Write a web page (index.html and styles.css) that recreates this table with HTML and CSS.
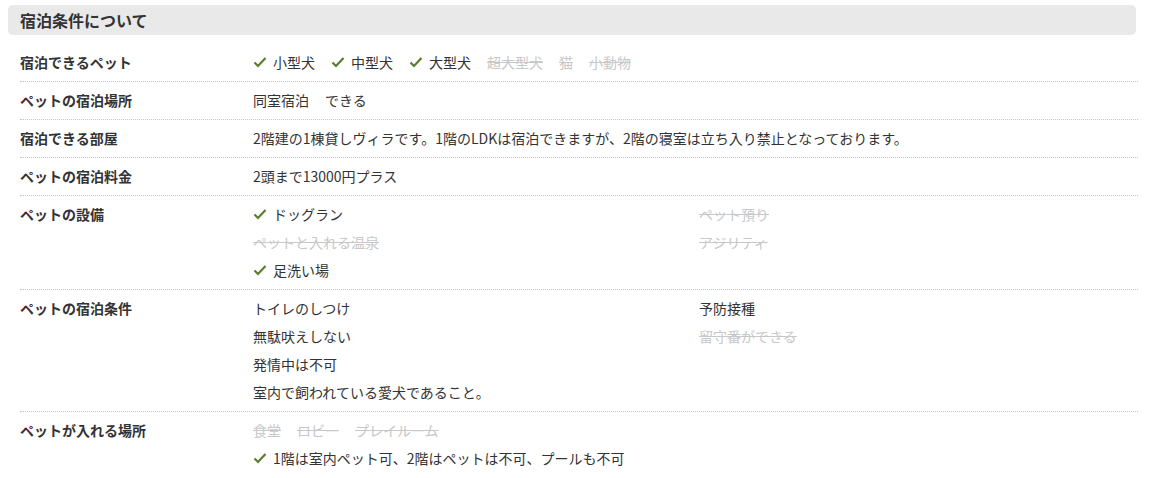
FILE: index.html
```html
<!DOCTYPE html>
<html lang="ja">
<head>
<meta charset="utf-8">
<title>宿泊条件について</title>
<link rel="stylesheet" href="styles.css">
</head>
<body>
<section class="conditions">
  <h2 class="conditions-title">宿泊条件について</h2>
  <dl class="cond-list">
    <div class="cond-row">
      <dt class="cond-label">宿泊できるペット</dt>
      <dd class="cond-value">
        <ul class="inline-items">
          <li class="item ok"><svg class="check" viewBox="0 0 14 14"><path d="M1.5 7.5 L5 11 L12.5 3"/></svg>小型犬</li>
          <li class="item ok"><svg class="check" viewBox="0 0 14 14"><path d="M1.5 7.5 L5 11 L12.5 3"/></svg>中型犬</li>
          <li class="item ok"><svg class="check" viewBox="0 0 14 14"><path d="M1.5 7.5 L5 11 L12.5 3"/></svg>大型犬</li>
          <li class="item ng">超大型犬</li>
          <li class="item ng">猫</li>
          <li class="item ng">小動物</li>
        </ul>
      </dd>
    </div>
    <div class="cond-row">
      <dt class="cond-label">ペットの宿泊場所</dt>
      <dd class="cond-value">
        <ul class="inline-items">
          <li class="item">同室宿泊</li>
          <li class="item">できる</li>
        </ul>
      </dd>
    </div>
    <div class="cond-row">
      <dt class="cond-label">宿泊できる部屋</dt>
      <dd class="cond-value">2階建の1棟貸しヴィラです。1階のLDKは宿泊できますが、2階の寝室は立ち入り禁止となっております。</dd>
    </div>
    <div class="cond-row">
      <dt class="cond-label">ペットの宿泊料金</dt>
      <dd class="cond-value">2頭まで13000円プラス</dd>
    </div>
    <div class="cond-row">
      <dt class="cond-label">ペットの設備</dt>
      <dd class="cond-value">
        <ul class="grid-items">
          <li class="item ok"><svg class="check" viewBox="0 0 14 14"><path d="M1.5 7.5 L5 11 L12.5 3"/></svg>ドッグラン</li>
          <li class="item ng">ペット預り</li>
          <li class="item ng">ペットと入れる温泉</li>
          <li class="item ng">アジリティ</li>
          <li class="item ok"><svg class="check" viewBox="0 0 14 14"><path d="M1.5 7.5 L5 11 L12.5 3"/></svg>足洗い場</li>
        </ul>
      </dd>
    </div>
    <div class="cond-row">
      <dt class="cond-label">ペットの宿泊条件</dt>
      <dd class="cond-value split">
        <ul class="col-items">
          <li class="item">トイレのしつけ</li>
          <li class="item">無駄吠えしない</li>
          <li class="item">発情中は不可</li>
          <li class="item">室内で飼われている愛犬であること。</li>
        </ul>
        <ul class="col-items">
          <li class="item">予防接種</li>
          <li class="item ng">留守番ができる</li>
        </ul>
      </dd>
    </div>
    <div class="cond-row">
      <dt class="cond-label">ペットが入れる場所</dt>
      <dd class="cond-value">
        <ul class="inline-items">
          <li class="item ng">食堂</li>
          <li class="item ng">ロビー</li>
          <li class="item ng">プレイルーム</li>
        </ul>
        <p class="note item ok"><svg class="check" viewBox="0 0 14 14"><path d="M1.5 7.5 L5 11 L12.5 3"/></svg>1階は室内ペット可、2階はペットは不可、プールも不可</p>
      </dd>
    </div>
  </dl>
</section>
</body>
</html>
```

FILE: styles.css
```css
html, body {
  margin: 0;
  padding: 0;
  background: #fff;
}

body {
  font-family: "Noto Sans CJK JP", "Noto Sans", sans-serif;
  color: #333;
  font-size: 14px;
}

.conditions {
  width: 1128px;
  padding: 5px 0 0 8px;
}

.conditions-title {
  margin: 0;
  height: 30px;
  line-height: 30px;
  padding: 0 12px;
  background: #e9e9e9;
  border-radius: 5px;
  font-size: 16px;
  font-weight: bold;
  color: #333;
}

.cond-list {
  margin: 9px -2px 0 12px;
  padding: 0;
}

.cond-row {
  display: flex;
  padding: 4px 0 5px;
  border-bottom: 1px dotted #c4c4c4;
  line-height: 28px;
}

.cond-row:last-child {
  border-bottom: none;
}

.cond-label {
  width: 233px;
  flex: none;
  margin: 0;
  font-weight: bold;
  color: #333;
}

.cond-value {
  margin: 0;
  flex: 1;
  color: #333;
}

.inline-items {
  list-style: none;
  margin: 0;
  padding: 0;
  display: flex;
  flex-wrap: wrap;
  column-gap: 16px;
}

.grid-items {
  list-style: none;
  margin: 0;
  padding: 0;
  display: grid;
  grid-template-columns: 446px 1fr;
}

.split {
  display: grid;
  grid-template-columns: 446px 1fr;
}

.col-items {
  list-style: none;
  margin: 0;
  padding: 0;
}

.item {
  display: flex;
  align-items: center;
}

.note {
  margin: 0;
}

.check {
  width: 14px;
  height: 14px;
  margin-right: 6px;
  flex: none;
  fill: none;
  stroke: #5a7d2d;
  stroke-width: 2.2;
}

.ng {
  color: #c8c8c8;
  text-decoration: line-through;
}
```
